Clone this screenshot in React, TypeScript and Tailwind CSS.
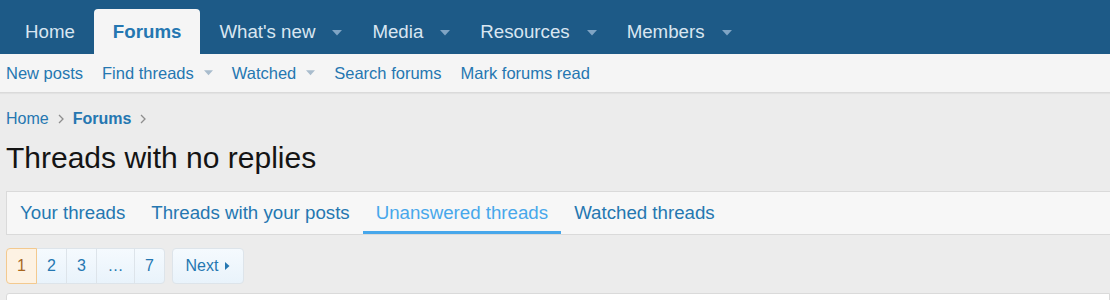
import { ReactNode } from 'react';

const navTabs = [
    { label: 'Home' },
    { label: 'Forums', active: true },
    { label: "What's new", caret: true },
    { label: 'Media', caret: true },
    { label: 'Resources', caret: true },
    { label: 'Members', caret: true },
];

const subLinks = [
    { label: 'New posts' },
    { label: 'Find threads', caret: true },
    { label: 'Watched', caret: true },
    { label: 'Search forums' },
    { label: 'Mark forums read' },
];

const threadTabs = ['Your threads', 'Threads with your posts', 'Unanswered threads', 'Watched threads'];

function Caret({ className }: { className: string }) {
    return (
        <svg width="10" height="6" viewBox="0 0 10 6" className={className}>
            <path d="M0 0 L10 0 L5 5.5 Z" fill="currentColor" />
        </svg>
    );
}

function Chevron() {
    return (
        <svg width="6" height="10" viewBox="0 0 6 10" className="mx-[9px] text-[#8e8e8e]">
            <path d="M1 1 L5 5 L1 9" fill="none" stroke="currentColor" strokeWidth="1.3" />
        </svg>
    );
}

function PageCell({ children, first, last, current, wide }: { children: ReactNode; first?: boolean; last?: boolean; current?: boolean; wide?: boolean }) {
    return (
        <div
            className={`flex items-center justify-center h-[36px] border ${wide ? 'w-[39px]' : 'w-[31px]'} ${first ? 'rounded-l-[4px]' : '-ml-px'} ${
                last ? 'rounded-r-[4px]' : ''
            } ${
                current
                    ? 'bg-[#fdf2e3] border-[#f3c98f] text-[#a8671f] relative z-10'
                    : 'bg-gradient-to-b from-[#f5fafe] to-[#e9f3fb] border-[#dde4ea] text-[#2577b1]'
            }`}
        >
            {children}
        </div>
    );
}

export default function App() {
    return (
        <div className="w-[1110px] h-[300px] overflow-hidden bg-[#ececec] font-['Liberation_Sans',Arial,sans-serif]">
            {/* Main nav */}
            <div className="h-[54px] bg-[#1d5a87] flex items-end pl-[6px]">
                {navTabs.map((tab) => (
                    <div
                        key={tab.label}
                        className={`h-[45px] flex items-center px-[19px] pt-[2px] text-[18.7px] ${
                            tab.active ? 'bg-[#f5f5f5] rounded-t-[4px] text-[#2577b1] font-bold' : 'text-[#d9e6f1]'
                        }`}
                    >
                        <span>{tab.label}</span>
                        {tab.caret && <Caret className="ml-[17px] -mr-[8px] text-[#7fa4c4]" />}
                    </div>
                ))}
            </div>

            {/* Sub nav */}
            <div className="h-[39px] bg-[#f5f5f5] border-b border-[#dadada] shadow-[0_1px_1px_rgba(0,0,0,0.04)] flex items-center pl-[6px] gap-[19px] text-[16.5px] text-[#2577b1]">
                {subLinks.map((l) => (
                    <div key={l.label} className="flex items-center">
                        <span>{l.label}</span>
                        {l.caret && <Caret className="ml-[10px] w-[9px] text-[#a9bccd]" />}
                    </div>
                ))}
            </div>

            {/* Body */}
            <div className="pl-[6px] pt-[15px]">
                <div className="h-[22px] flex items-center text-[16px] text-[#2577b1]">
                    <span>Home</span>
                    <Chevron />
                    <span className="font-bold">Forums</span>
                    <Chevron />
                </div>

                <h1 className="mt-[10px] h-[36px] leading-[36px] text-[30px] text-[#141414]">Threads with no replies</h1>

                <div className="mt-[15px] h-[44px] bg-[#f7f7f7] border-y border-l border-[#dadada] flex items-stretch">
                    {threadTabs.map((t) => {
                        const active = t === 'Unanswered threads';
                        return (
                            <div
                                key={t}
                                className={`flex items-center px-[13px] pt-[3px] text-[18.7px] border-b-[3px] ${
                                    active ? 'text-[#47a7eb] border-[#47a7eb]' : 'text-[#2577b1] border-transparent'
                                }`}
                            >
                                {t}
                            </div>
                        );
                    })}
                </div>

                {/* Pagination */}
                <div className="mt-[13px] flex items-center text-[16px]">
                    <div className="flex">
                        <PageCell first current>1</PageCell>
                        <PageCell>2</PageCell>
                        <PageCell>3</PageCell>
                        <PageCell wide>…</PageCell>
                        <PageCell last>7</PageCell>
                    </div>
                    <div className="ml-[7px] h-[36px] w-[72px] flex items-center justify-center border border-[#dde4ea] rounded-[4px] bg-gradient-to-b from-[#f5fafe] to-[#e9f3fb] text-[#2577b1]">
                        <span>Next</span>
                        <svg width="5" height="8" viewBox="0 0 5 8" className="ml-[7px]">
                            <path d="M0 0 L4.5 4 L0 8 Z" fill="currentColor" />
                        </svg>
                    </div>
                </div>

                <div className="mt-[9px] h-[20px] bg-white border border-[#dadada] rounded-tl-[3px]" />
            </div>
        </div>
    );
}
